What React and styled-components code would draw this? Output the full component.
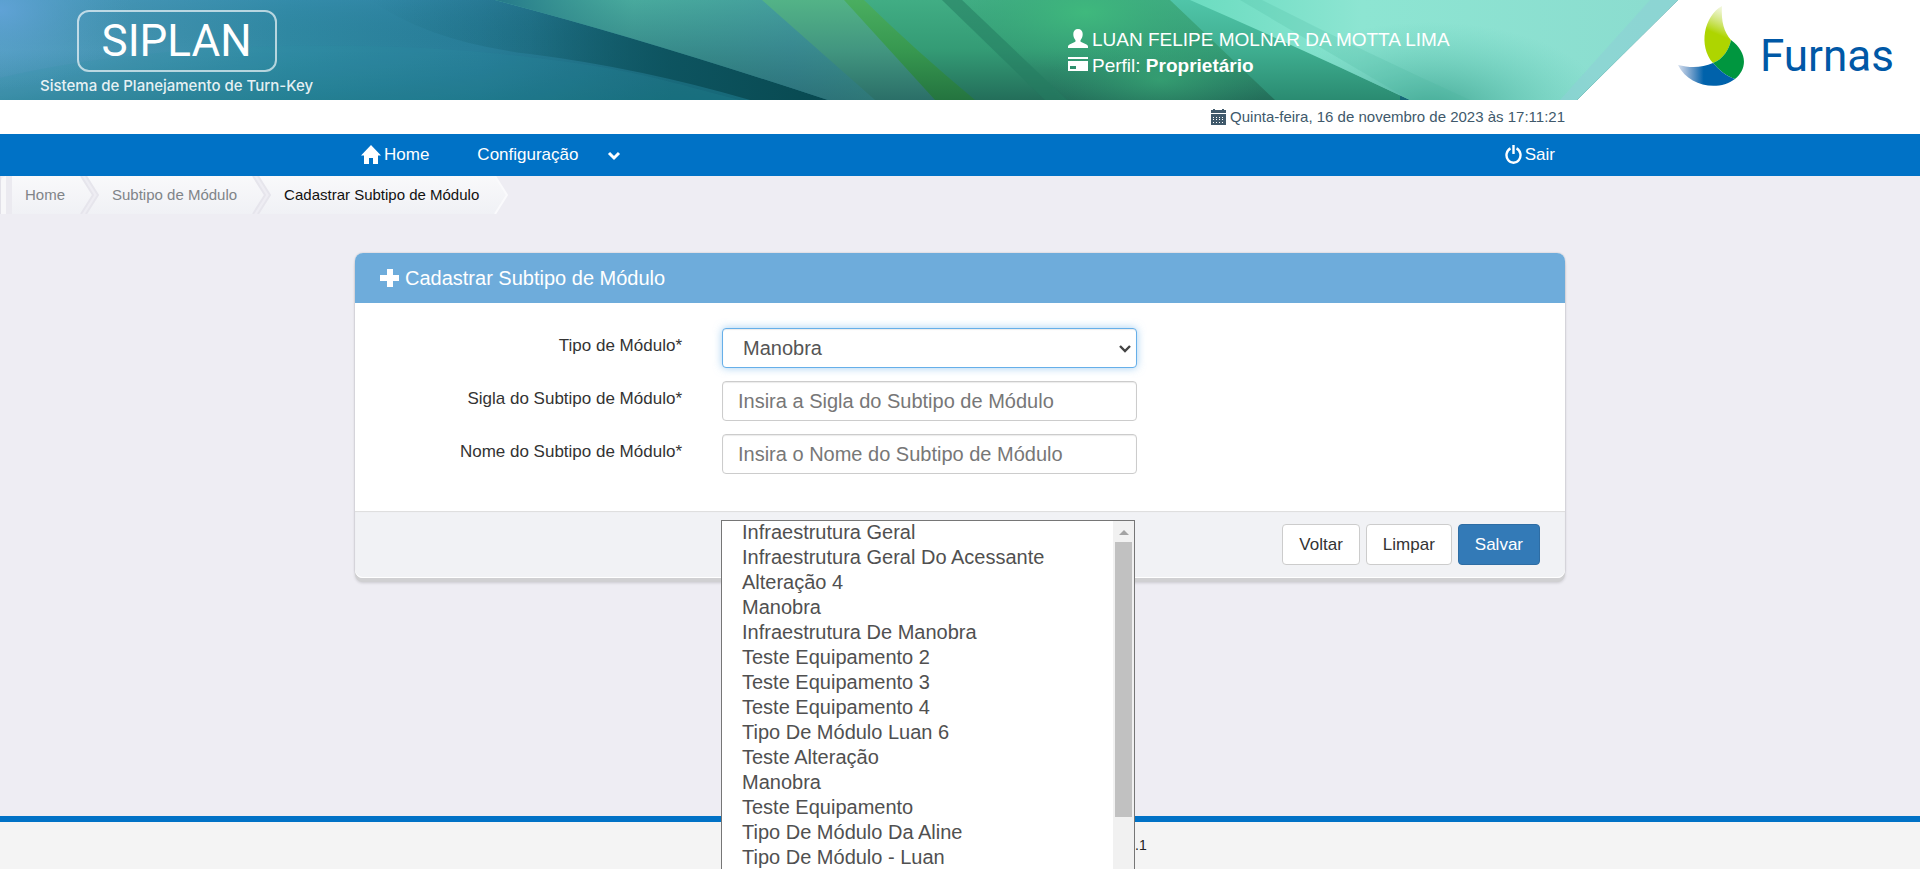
import React from "react";
import styled, { createGlobalStyle, css } from "styled-components";

const MODULE_TYPES = [
  "Infraestrutura Geral",
  "Infraestrutura Geral Do Acessante",
  "Alteração 4",
  "Manobra",
  "Infraestrutura De Manobra",
  "Teste Equipamento 2",
  "Teste Equipamento 3",
  "Teste Equipamento 4",
  "Tipo De Módulo Luan 6",
  "Teste Alteração",
  "Manobra",
  "Teste Equipamento",
  "Tipo De Módulo Da Aline",
  "Tipo De Módulo - Luan",
];

const GlobalStyle = createGlobalStyle`
  *, *::before, *::after { box-sizing: border-box; }
  body {
    margin: 0;
    font-family: "Liberation Sans", Arial, sans-serif;
    font-size: 17px;
    line-height: 26px;
    color: #333;
    background: #eeedf3;
  }
  input, select, button { font-family: inherit; }
`;

const Page = styled.div`
  min-height: 100vh;
  display: flex;
  flex-direction: column;
  overflow: hidden;
`;

const Container = styled.div`
  width: 100%;
  max-width: 1210px;
  margin: 0 auto;
`;

/* Banner */
const Banner = styled.header`
  display: grid;
  grid-template-columns: minmax(0, 1fr);
  height: 100px;
  background: #fff;
  > * { grid-area: 1 / 1; }
`;

const BannerArt = styled.svg`
  display: block;
  width: 100%;
  height: 100px;
`;

const BannerContent = styled.div`
  display: grid;
  grid-template-columns: minmax(0, 1068fr) minmax(0, 610fr) 242px;
  z-index: 1;
`;

const Brand = styled.div`
  display: flex;
  flex-direction: column;
  align-items: center;
  justify-self: start;
  margin-left: 40px;
  padding-top: 10px;
  color: #fff;
`;

const BrandName = styled.div`
  padding: 0 23px;
  border: 2px solid rgba(255, 255, 255, 0.65);
  border-radius: 12px;
  font: 400 44px/58px Roboto, sans-serif;
`;

const BrandTagline = styled.div`
  padding-top: 3px;
  font: 500 15px/22px Inter, sans-serif;
  color: rgba(255, 255, 255, 0.9);
`;

const Account = styled.div`
  padding-top: 27px;
  font-size: 19px;
  color: #fff;
  white-space: nowrap;
`;

const AccountLine = styled.div`
  display: flex;
  gap: 4px;
  svg { margin-top: 2px; }
`;

const Company = styled.a`
  display: flex;
  align-items: center;
  gap: 15px;
  height: 94px;
  font: 400 44px/48px Roboto, sans-serif;
  color: #0058a6;
  text-decoration: none;
  svg { flex: none; }
  span { padding-top: 18px; }
`;

/* Date strip and menu */
const DateStrip = styled.div`
  background: #fff;
  height: 34px;
  font-size: 15px;
  color: #40596b;
`;

const DateLine = styled(Container)`
  display: flex;
  justify-content: flex-end;
  align-items: center;
  gap: 4px;
  height: 34px;
`;

const Nav = styled.nav`
  background: #0072c6;
`;

const NavRow = styled(Container)`
  display: flex;
  align-items: center;
  height: 42px;
  padding: 0 10px 0 6px;
`;

const NavLink = styled.a`
  display: flex;
  align-items: center;
  gap: ${(p) => p.$gap || 3}px;
  margin-left: ${(p) => (p.$end ? "auto" : `${p.$offset || 0}px`)};
  color: #fff;
  text-decoration: none;
`;

const Crumbs = styled.ol`
  display: flex;
  height: 38px;
  margin: 0;
  padding: 0;
  list-style: none;
  font-size: 15px;
  line-height: 38px;
`;

const Crumb = styled.li`
  display: flex;
  svg { display: block; }
`;

const CrumbLink = styled.a`
  padding: 0 12px 0 13px;
  background: linear-gradient(#f9f9fb, #f0f1f5);
  color: ${(p) => (p.$current ? "#111" : "#808488")};
  text-decoration: none;
`;

/* Card */
const Main = styled.main`
  flex: 1;
  padding: 39px 0 60px;
`;

const Card = styled.form`
  border-radius: 8px;
  background: #fff;
  box-shadow: 0 4px 0 #d0d0d2, 0 5px 3px rgba(0, 0, 0, 0.15), 0 0 2px rgba(0, 0, 0, 0.2);
`;

const CardTitle = styled.h1`
  display: flex;
  align-items: center;
  gap: 6px;
  height: 50px;
  margin: 0;
  padding: 0 25px;
  border-radius: 8px 8px 0 0;
  background: #6eacdb;
  color: #fff;
  font-size: 20px;
  font-weight: 400;
`;

const CardBody = styled.div`
  display: grid;
  gap: 13px;
  padding: 25px 0 37px;
`;

const Row = styled.div`
  display: grid;
  grid-template-columns: minmax(0, 327fr) minmax(0, 415fr) minmax(0, 388fr);
  column-gap: 40px;
`;

const Label = styled.label`
  padding-top: 5px;
  text-align: right;
`;

const Field = styled.div`
  position: relative;
`;

const control = css`
  display: block;
  width: 100%;
  height: 40px;
  border: 1px solid #ccc;
  border-radius: 4px;
  background: #fff;
  color: #555;
  font-size: 20px;
  box-shadow: inset 0 1px 1px rgba(0, 0, 0, 0.08);
  outline: 0;
`;

const TextInput = styled.input`
  ${control}
  padding: 6px 15px;
  &::placeholder { color: #777; }
`;

const Select = styled.select`
  ${control}
  appearance: none;
  padding: 6px 28px 6px 20px;
  border-color: #66afe9;
  box-shadow: inset 0 1px 1px rgba(0, 0, 0, 0.08), 0 0 8px rgba(102, 175, 233, 0.6);
`;

const SelectArrow = styled.svg`
  position: absolute;
  top: 16px;
  right: 5px;
  pointer-events: none;
`;

const Popup = styled.div`
  position: absolute;
  z-index: 2;
  top: 192px;
  left: -1px;
  right: 2px;
  display: flex;
  border: 1px solid #767676;
  background: #fff;
  color: #505050;
  font-size: 20px;
  line-height: 23px;
`;

const OptionList = styled.ul`
  flex: 1;
  margin: 0;
  padding: 0 0 50px 20px;
  list-style: none;
  li { padding-bottom: 2px; }
`;

const ScrollTrack = styled.div`
  display: flex;
  flex-direction: column;
  align-items: center;
  width: 21px;
  padding-top: 9px;
  background: #f1f1f1;
`;

const ScrollThumb = styled.div`
  width: 17px;
  height: 275px;
  margin-top: 7px;
  background: #c1c1c1;
`;

const CardFooter = styled.div`
  display: flex;
  justify-content: flex-end;
  gap: 6px;
  padding: 13px 25px;
  border-radius: 0 0 8px 8px;
  background: #f1f2f5;
  box-shadow: inset 0 1px 1px #ddd, inset 0 -1px 0 #fff;
`;

const Button = styled.button`
  height: 41px;
  padding: 0 16px;
  border: 1px solid ${(p) => (p.$primary ? "#2e6da4" : "#ccc")};
  border-radius: 4px;
  background: ${(p) => (p.$primary ? "#337ab7" : "#fff")};
  color: ${(p) => (p.$primary ? "#fff" : "#333")};
  font-size: 17px;
`;

const PageFooter = styled.footer`
  height: 53px;
  padding-left: calc(50% + 175px);
  border-top: 6px solid #0072c6;
  background: #f4f4f4;
  font-size: 14px;
  line-height: 47px;
  color: #222;
`;

function BannerBackground() {
  return (
    <BannerArt viewBox="0 0 1920 100" preserveAspectRatio="none" aria-hidden="true">
      <defs>
        <clipPath id="bannerShape">
          <polygon points="0,0 1678,0 1577,100 0,100" />
        </clipPath>
        <linearGradient id="base">
          <stop offset="0" stopColor="#56a0c4" />
          <stop offset="0.07" stopColor="#4393b0" />
          <stop offset="0.15" stopColor="#3089a3" />
          <stop offset="0.25" stopColor="#287d98" />
          <stop offset="0.35" stopColor="#1b6a7c" />
          <stop offset="1" stopColor="#1b6a7c" />
        </linearGradient>
        <linearGradient id="shade" x2="0" y2="1">
          <stop offset="0" stopColor="#3f93bd" stopOpacity="0.25" />
          <stop offset="0.5" stopColor="#176a80" stopOpacity="0" />
          <stop offset="1" stopColor="#0c6670" stopOpacity="0.35" />
        </linearGradient>
        <radialGradient id="sky">
          <stop offset="0" stopColor="#64a4dc" stopOpacity="0.8" />
          <stop offset="1" stopColor="#4a98b8" stopOpacity="0" />
        </radialGradient>
        <linearGradient id="darkBand">
          <stop offset="0" stopColor="#0c5561" stopOpacity="0" />
          <stop offset="0.35" stopColor="#0b505b" stopOpacity="0.25" />
          <stop offset="0.65" stopColor="#0b505b" stopOpacity="0.85" />
          <stop offset="1" stopColor="#084950" />
        </linearGradient>
        <linearGradient id="lagoon" x2="0" y2="1">
          <stop offset="0" stopColor="#4dafa1" />
          <stop offset="0.45" stopColor="#3c908e" />
          <stop offset="1" stopColor="#27696b" />
        </linearGradient>
        <linearGradient id="lagoonEdge">
          <stop offset="0" stopColor="#24788a" />
          <stop offset="0.35" stopColor="#2f8a88" stopOpacity="0.15" />
          <stop offset="0.75" stopColor="#347f96" stopOpacity="0.35" />
          <stop offset="1" stopColor="#3a8f86" stopOpacity="0.4" />
        </linearGradient>
        <linearGradient id="leaf" x2="0" y2="1">
          <stop offset="0" stopColor="#53b387" />
          <stop offset="0.5" stopColor="#429680" />
          <stop offset="1" stopColor="#2b6f68" />
        </linearGradient>
        <linearGradient id="stem" x2="0" y2="1">
          <stop offset="0" stopColor="#4aae60" />
          <stop offset="0.5" stopColor="#379850" />
          <stop offset="1" stopColor="#24743f" />
        </linearGradient>
        <linearGradient id="meadow" x2="0" y2="1">
          <stop offset="0" stopColor="#41ad84" />
          <stop offset="0.5" stopColor="#349b75" />
          <stop offset="1" stopColor="#236e5a" />
        </linearGradient>
        <radialGradient id="glow">
          <stop offset="0" stopColor="#3fb97d" />
          <stop offset="1" stopColor="#36a577" stopOpacity="0" />
        </radialGradient>
        <linearGradient id="sea" x2="0" y2="1">
          <stop offset="0" stopColor="#50c5a9" />
          <stop offset="0.5" stopColor="#3fae90" />
          <stop offset="1" stopColor="#2a8b71" />
        </linearGradient>
        <linearGradient id="mint">
          <stop offset="0" stopColor="#6bdcc0" />
          <stop offset="0.35" stopColor="#8de5d2" />
          <stop offset="1" stopColor="#8bdccf" />
        </linearGradient>
        <radialGradient id="mintShade">
          <stop offset="0" stopColor="#3a9f8c" stopOpacity="0.9" />
          <stop offset="1" stopColor="#5cc5b2" stopOpacity="0" />
        </radialGradient>
        <clipPath id="mintShape">
          <path d="M1190,0 H1680 V100 H1410 Q1300,48 1190,0Z" />
        </clipPath>
      </defs>
      <g clipPath="url(#bannerShape)">
        <rect width="1920" height="100" fill="url(#base)" />
        <rect width="1920" height="100" fill="url(#shade)" />
        <ellipse cx="0" cy="10" rx="130" ry="80" fill="url(#sky)" />
        <path d="M0,78 C130,46 330,38 480,52 S660,80 740,100 L0,100Z" fill="#2c93a5" fillOpacity="0.14" />
        <path d="M370,0 L495,0 Q640,38 828,100 L750,100 Q640,68 530,54 Q430,42 370,0Z" fill="url(#darkBand)" />
        <path d="M495,0 H780 L890,100 H828 Q640,38 495,0Z" fill="url(#lagoon)" />
        <path d="M495,0 H780 L890,100 H828 Q640,38 495,0Z" fill="url(#lagoonEdge)" />
        <path d="M762,0 H850 L940,100 H875Z" fill="url(#leaf)" />
        <path d="M860,0 H1300 V100 H965Z" fill="url(#meadow)" />
        <path d="M844,0 H864 Q915,50 975,100 H935Z" fill="url(#stem)" />
        <ellipse cx="1085" cy="12" rx="130" ry="60" fill="url(#glow)" />
        <path d="M942,0 H962 L1067,100 H1045Z" fill="#247c60" fillOpacity="0.55" />
        <ellipse cx="1160" cy="80" rx="110" ry="50" fill="url(#glow)" fillOpacity="0.5" />
        <path d="M1170,0 H1400 V100 H1275Z" fill="url(#sea)" />
        <path d="M1190,0 H1680 V100 H1410 Q1300,48 1190,0Z" fill="url(#mint)" />
        <g clipPath="url(#mintShape)">
          <ellipse cx="1430" cy="112" rx="180" ry="90" fill="url(#mintShade)" />
          <path d="M1240,0 H1262 Q1360,50 1470,100 H1410Z" fill="#45b39d" fillOpacity="0.2" />
        </g>
        <path d="M1678,0 L1577,100 H1560 L1650,0Z" fill="#8ed0d6" fillOpacity="0.6" />
      </g>
    </BannerArt>
  );
}

function CompanyMark() {
  return (
    <svg width="67" height="82" viewBox="0 0 67 82" aria-hidden="true">
      <defs>
        <linearGradient id="limeFade" x1="0.6" y1="0" x2="0.4" y2="1">
          <stop offset="0" stopColor="#c4dc60" stopOpacity="0.2" />
          <stop offset="0.5" stopColor="#aed500" />
        </linearGradient>
        <linearGradient id="blueFade">
          <stop offset="0" stopColor="#2b5fa8" stopOpacity="0.2" />
          <stop offset="0.45" stopColor="#0062ab" />
        </linearGradient>
      </defs>
      <path d="M44,0 C26,10 20,40 35,57 C45,53 51,44 53,34 C46,26 43,16 44,0Z" fill="url(#limeFade)" />
      <path d="M53,34 C69,46 70,62 57,73 C48,70 41,64 35,57 C45,53 51,44 53,34Z" fill="#00963f" />
      <path d="M0,59 C10,80 40,86 57,73 C48,70 41,64 35,57 C24,62 12,62 0,59Z" fill="url(#blueFade)" />
    </svg>
  );
}

const UserIcon = () => (
  <svg width="20" height="20" viewBox="0 0 20 20" fill="currentColor" aria-hidden="true">
    <path d="M10 0C7 0 5.300 2 5.300 5c0 3 1 4.500 1.900 5.700.6.800.5 1.900-.4 2.400L1.500 15.600C.5 16.100 0 16.800 0 17.700V19h20v-1.300c0-.9-.5-1.600-1.500-2.100l-5.300-2.500c-.9-.5-1-1.600-.4-2.400.9-1.200 1.900-2.700 1.900-5.700 0-3-1.700-5-4.700-5z" />
  </svg>
);

const CardIcon = () => (
  <svg width="20" height="20" viewBox="0 0 20 20" fill="currentColor" aria-hidden="true">
    <path fillRule="evenodd" d="M0 2h20v2H0zM0 6h20v10H0zM2 11h6v3H2z" />
  </svg>
);

const CalendarIcon = () => (
  <svg width="15" height="16" viewBox="0 0 15 16" fill="currentColor" aria-hidden="true">
    <path d="M0 1h2V0h2v1h7V0h2v1h2v3H0z" />
    <path fillRule="evenodd" d="M0 5h15v11H0zM2 8v1h1V8zM5 8v1h1V8zM8 8v1h1V8zM11 8v1h1V8zM2 10v1h1v-1zM5 10v1h1v-1zM8 10v1h1v-1zM11 10v1h1v-1zM2 13v1h1v-1zM5 13v1h1v-1zM8 13v1h1v-1zM11 13v1h1v-1z" />
  </svg>
);

const HomeIcon = () => (
  <svg width="20" height="20" viewBox="0 0 20 20" fill="currentColor" aria-hidden="true">
    <path d="M10 0l10 10.500h-3V19h-5v-6H8v6H3v-8.500H0z" />
  </svg>
);

const ChevronIcon = () => (
  <svg width="14" height="12" viewBox="0 0 14 12" fill="none" stroke="currentColor" strokeWidth="3" aria-hidden="true">
    <path d="M2 4l5 5 5-5" />
  </svg>
);

const PowerIcon = () => (
  <svg width="17" height="20" viewBox="0 0 17 20" fill="none" stroke="currentColor" strokeWidth="2.400" aria-hidden="true">
    <path d="M5.500 3.400A7 7.500 0 1 0 11.500 3.400M8.500 0v9" />
  </svg>
);

const PlusIcon = () => (
  <svg width="19" height="19" viewBox="0 0 19 19" fill="currentColor" aria-hidden="true">
    <path d="M7 0h6v6h6v6h-6v6H7v-6H0V6h7z" />
  </svg>
);

const CrumbGradient = ({ id }) => (
  <linearGradient id={id} x2="0" y2="1">
    <stop offset="0" stopColor="#f9f9fb" />
    <stop offset="1" stopColor="#f0f1f5" />
  </linearGradient>
);

const CrumbStart = () => (
  <svg width="12" height="38" viewBox="0 0 12 38" aria-hidden="true">
    <path d="M1 38V5l1-3 4-2v38z" fill="#f7f7f9" />
    <path d="M0 0h1v38H0z" fill="#e2e1e8" />
    <path d="M6 0h6v38H6z" fill="#ebeaf0" />
  </svg>
);

const CrumbArrow = ({ id, last }) => (
  <svg width="22" height="38" viewBox="0 0 22 38" aria-hidden="true">
    <defs><CrumbGradient id={id} /></defs>
    {!last && <path d="M10 0h12v38H9l12-19z" fill={`url(#${id})`} />}
    <path d="M0 0h4l12 19L4 38H0z" fill={`url(#${id})`} />
    <path d="M4 0l12 19L4 38" fill="none" stroke={last ? "#fafafc" : "#e6e5ec"} strokeWidth="2" />
    {!last && <path d="M9 0l12 19L9 38" fill="none" stroke="#e6e5ec" strokeWidth="2" />}
  </svg>
);

export default function App() {
  return (
    <Page>
      <GlobalStyle />
      <Banner>
        <BannerBackground />
        <BannerContent>
          <Brand>
            <BrandName>SIPLAN</BrandName>
            <BrandTagline>Sistema de Planejamento de Turn-Key</BrandTagline>
          </Brand>
          <Account>
            <AccountLine><UserIcon /><span>LUAN FELIPE MOLNAR DA MOTTA LIMA</span></AccountLine>
            <AccountLine><CardIcon /><span>Perfil: <strong>Proprietário</strong></span></AccountLine>
          </Account>
          <Company href="#furnas"><CompanyMark /><span>Furnas</span></Company>
        </BannerContent>
      </Banner>

      <DateStrip>
        <DateLine><CalendarIcon /><span>Quinta-feira, 16 de novembro de 2023 às 17:11:21</span></DateLine>
      </DateStrip>

      <Nav>
        <NavRow>
          <NavLink href="#home"><HomeIcon />Home</NavLink>
          <NavLink href="#configuracao" $offset={48} $gap={29}>Configuração<ChevronIcon /></NavLink>
          <NavLink href="#sair" $end><PowerIcon />Sair</NavLink>
        </NavRow>
      </Nav>

      <Crumbs>
        <Crumb><CrumbStart /><CrumbLink href="#home">Home</CrumbLink><CrumbArrow id="crumb1" /></Crumb>
        <Crumb><CrumbLink href="#subtipo">Subtipo de Módulo</CrumbLink><CrumbArrow id="crumb2" /></Crumb>
        <Crumb><CrumbLink href="#cadastrar" $current>Cadastrar Subtipo de Módulo</CrumbLink><CrumbArrow id="crumb3" last /></Crumb>
      </Crumbs>

      <Main>
        <Container>
          <Card>
            <CardTitle><PlusIcon />Cadastrar Subtipo de Módulo</CardTitle>
            <CardBody>
              <Row>
                <Label htmlFor="tipo">Tipo de Módulo*</Label>
                <Field>
                  <Select id="tipo" defaultValue="3">
                    {MODULE_TYPES.map((name, i) => <option key={i} value={i}>{name}</option>)}
                  </Select>
                  <SelectArrow width="14" height="10" viewBox="0 0 14 10" fill="none" stroke="#444" strokeWidth="2.400" aria-hidden="true">
                    <path d="M2 2l5 5 5-5" />
                  </SelectArrow>
                  <Popup>
                    <OptionList>
                      {MODULE_TYPES.map((name, i) => <li key={i}>{name}</li>)}
                    </OptionList>
                    <ScrollTrack>
                      <svg width="10" height="5" viewBox="0 0 10 5" aria-hidden="true"><path d="M0 5l5-5 5 5z" fill="#a3a3a3" /></svg>
                      <ScrollThumb />
                    </ScrollTrack>
                  </Popup>
                </Field>
              </Row>
              <Row>
                <Label htmlFor="sigla">Sigla do Subtipo de Módulo*</Label>
                <TextInput id="sigla" placeholder="Insira a Sigla do Subtipo de Módulo" />
              </Row>
              <Row>
                <Label htmlFor="nome">Nome do Subtipo de Módulo*</Label>
                <TextInput id="nome" placeholder="Insira o Nome do Subtipo de Módulo" />
              </Row>
            </CardBody>
            <CardFooter>
              <Button type="button">Voltar</Button>
              <Button type="reset">Limpar</Button>
              <Button type="button" $primary>Salvar</Button>
            </CardFooter>
          </Card>
        </Container>
      </Main>

      <PageFooter>.1</PageFooter>
    </Page>
  );
}
